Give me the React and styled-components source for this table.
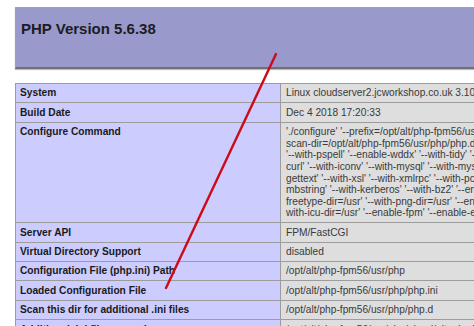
import React from 'react';
import styled, { createGlobalStyle } from 'styled-components';

const GlobalStyle = createGlobalStyle`
  html, body {
    margin: 0;
    background: #fff;
    overflow: hidden;
  }
  body {
    font-family: 'Liberation Sans', Arial, sans-serif;
  }
`;

const Page = styled.div`
  position: relative;
  width: 474px;
  height: 326px;
  overflow: hidden;
  padding: 7px 0 0 15px;
  box-sizing: border-box;
`;

const Content = styled.div`
  width: 640px;
`;

const Header = styled.div`
  height: 59px;
  background-color: #9999cc;
  border: 1px solid #a2a2a2;
  border-bottom: 2px solid #717171;
  box-shadow: 0 1px 1px #bbb;
`;

const Title = styled.h1`
  margin: 0;
  padding: 12px 0 0 5px;
  font-size: 15px;
  font-weight: bold;
  color: #1c1c22;
`;

const InfoTable = styled.table`
  margin-top: 14px;
  width: 640px;
  border-collapse: collapse;
  table-layout: fixed;
  font-size: 10.2px;
  line-height: 11.6px;
`;

const Cell = styled.td`
  border: 1px solid #9c9c9c;
  padding: 3.4px 0 3.4px ${({ $label }) => ($label ? '4px' : '5px')};
  vertical-align: top;
  white-space: nowrap;
  overflow: hidden;
  background-color: ${({ $label }) => ($label ? '#ccccff' : '#dedede')};
  color: ${({ $label }) => ($label ? '#1a1a1a' : '#3a3a3a')};
  font-weight: ${({ $label }) => ($label ? 'bold' : 'normal')};
`;

const Line = styled.div`
  white-space: nowrap;
`;

const Marker = styled.svg`
  position: absolute;
  left: 0;
  top: 0;
  pointer-events: none;
`;

const configureLines = [
  "'./configure' '--prefix=/opt/alt/php-fpm56/usr' '--with-config-file-path=/opt/alt/php-fpm56/usr/php'",
  "scan-dir=/opt/alt/php-fpm56/usr/php/php.d' '--disable-debug' '--with-pic' '--disable-rpath'",
  "'--with-pspell' '--enable-wddx' '--with-tidy' '--with-libdir=lib64' '--with-pcre-regex' '--with-",
  "curl' '--with-iconv' '--with-mysql' '--with-mysqli' '--with-pdo-mysql' '--with-gd' '--with-",
  "gettext' '--with-xsl' '--with-xmlrpc' '--with-pcntl' '--enable-bcmath' '--enable-",
  "mbstring' '--with-kerberos' '--with-bz2' '--enable-exif' '--enable-ftp' '--with-",
  "freetype-dir=/usr' '--with-png-dir=/usr' '--enable-intl' '--with-jpeg-dir=/usr' '--",
  "with-icu-dir=/usr' '--enable-fpm' '--enable-embed' '--enable-sockets' '--enable-soap'",
];

const rows = [
  ['System', 'Linux cloudserver2.jcworkshop.co.uk 3.10.0-862.14.4.el7.x86_64 #1 SMP'],
  ['Build Date', 'Dec 4 2018 17:20:33'],
  ['Configure Command', configureLines],
  ['Server API', 'FPM/FastCGI'],
  ['Virtual Directory Support', 'disabled'],
  ['Configuration File (php.ini) Path', '/opt/alt/php-fpm56/usr/php'],
  ['Loaded Configuration File', '/opt/alt/php-fpm56/usr/php/php.ini'],
  ['Scan this dir for additional .ini files', '/opt/alt/php-fpm56/usr/php/php.d'],
  ['Additional .ini files parsed', '/opt/alt/php-fpm56/usr/php/php.d/alt_php.ini'],
];

export default function App() {
  return (
    <Page>
      <GlobalStyle />
      <Content>
        <Header>
          <Title>PHP Version 5.6.38</Title>
        </Header>
        <InfoTable>
          <colgroup>
            <col style={{ width: 265 }} />
            <col />
          </colgroup>
          <tbody>
            {rows.map(([label, value]) => (
              <tr key={label}>
                <Cell $label>{label}</Cell>
                <Cell>
                  {Array.isArray(value)
                    ? value.map((text, i) => <Line key={i}>{text}</Line>)
                    : value}
                </Cell>
              </tr>
            ))}
          </tbody>
        </InfoTable>
      </Content>
      <Marker width="474" height="326" viewBox="0 0 474 326">
        <line
          x1="276"
          y1="54"
          x2="166"
          y2="288"
          stroke="#cc0a18"
          strokeWidth="2.4"
          strokeLinecap="round"
        />
      </Marker>
    </Page>
  );
}
